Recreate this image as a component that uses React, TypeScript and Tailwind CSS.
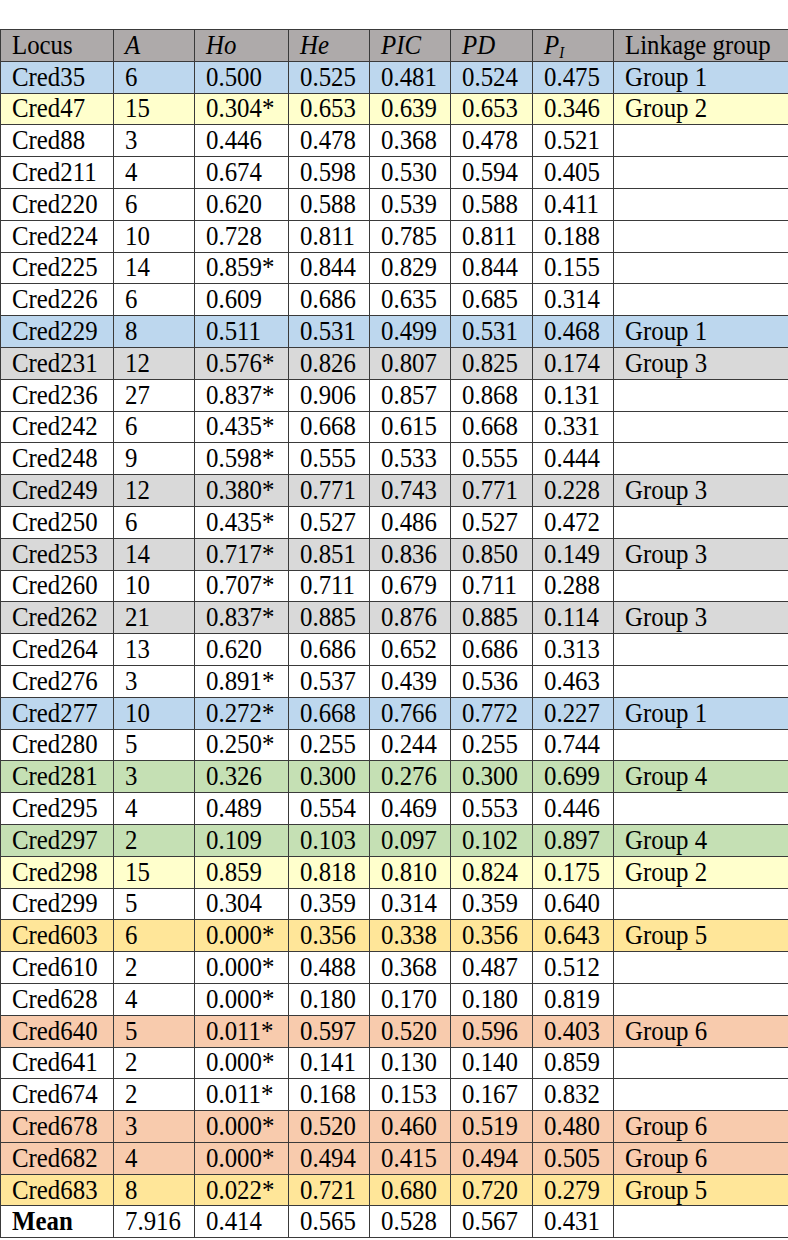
import React from 'react';

type Row = {
  locus: string;
  a: string;
  ho: string;
  he: string;
  pic: string;
  pd: string;
  pi: string;
  group?: string;
  bg?: string;
};

const BLUE = 'bg-[#bdd7ee]';
const YELLOW = 'bg-[#ffffcc]';
const GRAY = 'bg-[#d9d9d9]';
const GREEN = 'bg-[#c5e0b4]';
const GOLD = 'bg-[#ffe699]';
const SALMON = 'bg-[#f8cbad]';

const rows: Row[] = [
  { locus: 'Cred35', a: '6', ho: '0.500', he: '0.525', pic: '0.481', pd: '0.524', pi: '0.475', group: 'Group 1', bg: BLUE },
  { locus: 'Cred47', a: '15', ho: '0.304*', he: '0.653', pic: '0.639', pd: '0.653', pi: '0.346', group: 'Group 2', bg: YELLOW },
  { locus: 'Cred88', a: '3', ho: '0.446', he: '0.478', pic: '0.368', pd: '0.478', pi: '0.521' },
  { locus: 'Cred211', a: '4', ho: '0.674', he: '0.598', pic: '0.530', pd: '0.594', pi: '0.405' },
  { locus: 'Cred220', a: '6', ho: '0.620', he: '0.588', pic: '0.539', pd: '0.588', pi: '0.411' },
  { locus: 'Cred224', a: '10', ho: '0.728', he: '0.811', pic: '0.785', pd: '0.811', pi: '0.188' },
  { locus: 'Cred225', a: '14', ho: '0.859*', he: '0.844', pic: '0.829', pd: '0.844', pi: '0.155' },
  { locus: 'Cred226', a: '6', ho: '0.609', he: '0.686', pic: '0.635', pd: '0.685', pi: '0.314' },
  { locus: 'Cred229', a: '8', ho: '0.511', he: '0.531', pic: '0.499', pd: '0.531', pi: '0.468', group: 'Group 1', bg: BLUE },
  { locus: 'Cred231', a: '12', ho: '0.576*', he: '0.826', pic: '0.807', pd: '0.825', pi: '0.174', group: 'Group 3', bg: GRAY },
  { locus: 'Cred236', a: '27', ho: '0.837*', he: '0.906', pic: '0.857', pd: '0.868', pi: '0.131' },
  { locus: 'Cred242', a: '6', ho: '0.435*', he: '0.668', pic: '0.615', pd: '0.668', pi: '0.331' },
  { locus: 'Cred248', a: '9', ho: '0.598*', he: '0.555', pic: '0.533', pd: '0.555', pi: '0.444' },
  { locus: 'Cred249', a: '12', ho: '0.380*', he: '0.771', pic: '0.743', pd: '0.771', pi: '0.228', group: 'Group 3', bg: GRAY },
  { locus: 'Cred250', a: '6', ho: '0.435*', he: '0.527', pic: '0.486', pd: '0.527', pi: '0.472' },
  { locus: 'Cred253', a: '14', ho: '0.717*', he: '0.851', pic: '0.836', pd: '0.850', pi: '0.149', group: 'Group 3', bg: GRAY },
  { locus: 'Cred260', a: '10', ho: '0.707*', he: '0.711', pic: '0.679', pd: '0.711', pi: '0.288' },
  { locus: 'Cred262', a: '21', ho: '0.837*', he: '0.885', pic: '0.876', pd: '0.885', pi: '0.114', group: 'Group 3', bg: GRAY },
  { locus: 'Cred264', a: '13', ho: '0.620', he: '0.686', pic: '0.652', pd: '0.686', pi: '0.313' },
  { locus: 'Cred276', a: '3', ho: '0.891*', he: '0.537', pic: '0.439', pd: '0.536', pi: '0.463' },
  { locus: 'Cred277', a: '10', ho: '0.272*', he: '0.668', pic: '0.766', pd: '0.772', pi: '0.227', group: 'Group 1', bg: BLUE },
  { locus: 'Cred280', a: '5', ho: '0.250*', he: '0.255', pic: '0.244', pd: '0.255', pi: '0.744' },
  { locus: 'Cred281', a: '3', ho: '0.326', he: '0.300', pic: '0.276', pd: '0.300', pi: '0.699', group: 'Group 4', bg: GREEN },
  { locus: 'Cred295', a: '4', ho: '0.489', he: '0.554', pic: '0.469', pd: '0.553', pi: '0.446' },
  { locus: 'Cred297', a: '2', ho: '0.109', he: '0.103', pic: '0.097', pd: '0.102', pi: '0.897', group: 'Group 4', bg: GREEN },
  { locus: 'Cred298', a: '15', ho: '0.859', he: '0.818', pic: '0.810', pd: '0.824', pi: '0.175', group: 'Group 2', bg: YELLOW },
  { locus: 'Cred299', a: '5', ho: '0.304', he: '0.359', pic: '0.314', pd: '0.359', pi: '0.640' },
  { locus: 'Cred603', a: '6', ho: '0.000*', he: '0.356', pic: '0.338', pd: '0.356', pi: '0.643', group: 'Group 5', bg: GOLD },
  { locus: 'Cred610', a: '2', ho: '0.000*', he: '0.488', pic: '0.368', pd: '0.487', pi: '0.512' },
  { locus: 'Cred628', a: '4', ho: '0.000*', he: '0.180', pic: '0.170', pd: '0.180', pi: '0.819' },
  { locus: 'Cred640', a: '5', ho: '0.011*', he: '0.597', pic: '0.520', pd: '0.596', pi: '0.403', group: 'Group 6', bg: SALMON },
  { locus: 'Cred641', a: '2', ho: '0.000*', he: '0.141', pic: '0.130', pd: '0.140', pi: '0.859' },
  { locus: 'Cred674', a: '2', ho: '0.011*', he: '0.168', pic: '0.153', pd: '0.167', pi: '0.832' },
  { locus: 'Cred678', a: '3', ho: '0.000*', he: '0.520', pic: '0.460', pd: '0.519', pi: '0.480', group: 'Group 6', bg: SALMON },
  { locus: 'Cred682', a: '4', ho: '0.000*', he: '0.494', pic: '0.415', pd: '0.494', pi: '0.505', group: 'Group 6', bg: SALMON },
  { locus: 'Cred683', a: '8', ho: '0.022*', he: '0.721', pic: '0.680', pd: '0.720', pi: '0.279', group: 'Group 5', bg: GOLD },
];

const cell = 'border border-[#3a3a3a] pl-[11px] pr-0 py-0 align-middle whitespace-nowrap';

// the scan is a little taller than Times at this width, so squeeze the glyphs sideways
const Txt = ({ children }: { children?: React.ReactNode }) => (
  <span className="inline-block origin-left scale-x-[0.92]">{children}</span>
);

export default function App() {
  return (
    <div className="bg-white pt-[29px] font-['Liberation_Serif',serif] text-[27px] leading-none text-black">
      <table className="w-[788px] table-fixed border-collapse">
        <colgroup>
          <col className="w-[113px]" />
          <col className="w-[81px]" />
          <col className="w-[94px]" />
          <col className="w-[81px]" />
          <col className="w-[81px]" />
          <col className="w-[82px]" />
          <col className="w-[81px]" />
          <col className="w-[175px]" />
        </colgroup>
        <thead>
          <tr className="h-[31.8px] bg-[#aeaaaa] text-left">
            <th className={`${cell} font-normal`}><Txt>Locus</Txt></th>
            <th className={`${cell} font-normal italic`}><Txt>A</Txt></th>
            <th className={`${cell} font-normal italic`}><Txt>Ho</Txt></th>
            <th className={`${cell} font-normal italic`}><Txt>He</Txt></th>
            <th className={`${cell} font-normal italic`}><Txt>PIC</Txt></th>
            <th className={`${cell} font-normal italic`}><Txt>PD</Txt></th>
            <th className={`${cell} font-normal italic`}>
              <Txt>
                P<sub className="text-[16px] italic">I</sub>
              </Txt>
            </th>
            <th className={`${cell} font-normal`}><Txt>Linkage group</Txt></th>
          </tr>
        </thead>
        <tbody>
          {rows.map((r) => (
            <tr key={r.locus} className={`h-[31.8px] ${r.bg ?? 'bg-white'}`}>
              <td className={cell}><Txt>{r.locus}</Txt></td>
              <td className={cell}><Txt>{r.a}</Txt></td>
              <td className={cell}><Txt>{r.ho}</Txt></td>
              <td className={cell}><Txt>{r.he}</Txt></td>
              <td className={cell}><Txt>{r.pic}</Txt></td>
              <td className={cell}><Txt>{r.pd}</Txt></td>
              <td className={cell}><Txt>{r.pi}</Txt></td>
              <td className={cell}><Txt>{r.group ?? ''}</Txt></td>
            </tr>
          ))}
          <tr className="h-[31.8px] bg-white">
            <td className={`${cell} font-bold`}><Txt>Mean</Txt></td>
            <td className={cell}><Txt>7.916</Txt></td>
            <td className={cell}><Txt>0.414</Txt></td>
            <td className={cell}><Txt>0.565</Txt></td>
            <td className={cell}><Txt>0.528</Txt></td>
            <td className={cell}><Txt>0.567</Txt></td>
            <td className={cell}><Txt>0.431</Txt></td>
            <td className={cell}></td>
          </tr>
        </tbody>
      </table>
    </div>
  );
}
